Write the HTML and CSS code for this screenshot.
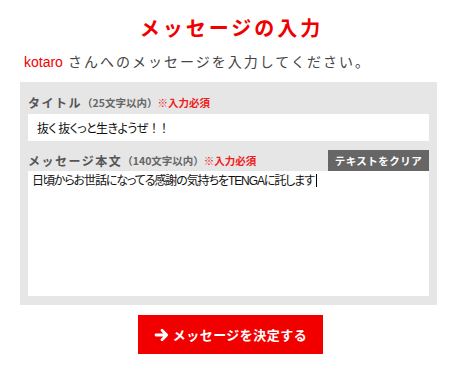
FILE: index.html
```html
<!DOCTYPE html>
<html lang="ja">
<head>
<meta charset="utf-8">
<title>メッセージの入力</title>
<link rel="stylesheet" href="styles.css">
</head>
<body>
<div class="page">
  <h1 class="title">メッセージの入力</h1>
  <p class="lead"><span class="name">kotaro</span> さんへのメッセージを入力してください。</p>
  <div class="panel">
    <div class="label-row">
      <span class="label">タイトル</span><span class="note">（25文字以内）</span><span class="req">※入力必須</span>
    </div>
    <div class="input">抜く 抜くっと生きようぜ<span class="bang">！！</span></div>
    <div class="label-row label-row2">
      <span class="label">メッセージ本文</span><span class="note">（140文字以内）</span><span class="req">※入力必須</span>
      <span class="clear">テキストをクリア</span>
    </div>
    <div class="textarea">日頃からお世話になってる感謝の気持ちを<span class="latin">TENGA</span>に託します<span class="caret"></span></div>
  </div>
  <div class="submit-wrap">
    <div class="submit">
      <svg class="arrow" width="16" height="16" viewBox="0 0 16 16" aria-hidden="true"><path d="M2 8H12.5M8 3.3L12.7 8L8 12.7" fill="none" stroke="#fff" stroke-width="2.8" stroke-linecap="round" stroke-linejoin="round"/></svg>
      <span>メッセージを決定する</span>
    </div>
  </div>
</div>
</body>
</html>
```
FILE: styles.css
```css
html, body {
  margin: 0;
  padding: 0;
  background: #fff;
}
body {
  font-family: "Noto Sans CJK JP", "Liberation Sans", sans-serif;
  color: #444;
}
.page {
  width: 460px;
}
.title {
  margin: 0;
  padding-top: 15px;
  text-align: center;
  font-size: 20px;
  line-height: 26px;
  font-weight: bold;
  color: #f00000;
  letter-spacing: 3px;
  padding-left: 3px;
}
.lead {
  margin: 10px 0 0 24px;
  font-size: 14px;
  line-height: 20px;
  letter-spacing: 2px;
  color: #444;
}
.name {
  font-family: "Liberation Sans", sans-serif;
  color: #f00000;
  letter-spacing: 0;
}
.panel {
  margin: 10px 23px 0 20px;
  background: #e6e6e6;
  padding: 12px 8px 9px 8px;
}
.label-row {
  display: flex;
  align-items: center;
  height: 16px;
  font-weight: bold;
}
.label {
  font-size: 12px;
  letter-spacing: 1.5px;
  color: #555;
}
.note {
  font-size: 10.5px;
  color: #666;
}
.req {
  font-size: 10.5px;
  color: #f02020;
}
.input {
  margin-top: 4px;
  height: 27px;
  background: #fff;
  box-sizing: border-box;
  padding-left: 9px;
  font-size: 12px;
  letter-spacing: -0.6px;
  line-height: 27px;
  color: #111;
  font-feature-settings: "palt";
}
.bang {
  font-feature-settings: normal;
  letter-spacing: -2px;
}
.label-row2 {
  margin-top: 9px;
  height: 21px;
}
.clear {
  margin-left: auto;
  width: 101px;
  height: 21px;
  background: #666;
  color: #fff;
  font-size: 10.5px;
  line-height: 21px;
  text-align: center;
  letter-spacing: 0.5px;
}
.textarea {
  height: 125px;
  background: #fff;
  box-sizing: border-box;
  padding: 1px 4px 0 4px;
  font-size: 12px;
  letter-spacing: -1.1px;
  line-height: 16px;
  color: #111;
  font-feature-settings: "palt";
}
.latin {
  font-family: "Liberation Sans", sans-serif;
}
.caret {
  display: inline-block;
  width: 1px;
  height: 13px;
  background: #000;
  vertical-align: -2px;
  margin-left: 2px;
}
.submit-wrap {
  display: flex;
  justify-content: center;
  margin-top: 10px;
  padding-left: 1px;
}
.submit {
  width: 185px;
  height: 39px;
  background: #f20000;
  color: #fff;
  display: flex;
  align-items: center;
  justify-content: center;
  gap: 3px;
  font-size: 13px;
  font-weight: bold;
  letter-spacing: 0.5px;
}
.arrow {
  display: block;
}
```
